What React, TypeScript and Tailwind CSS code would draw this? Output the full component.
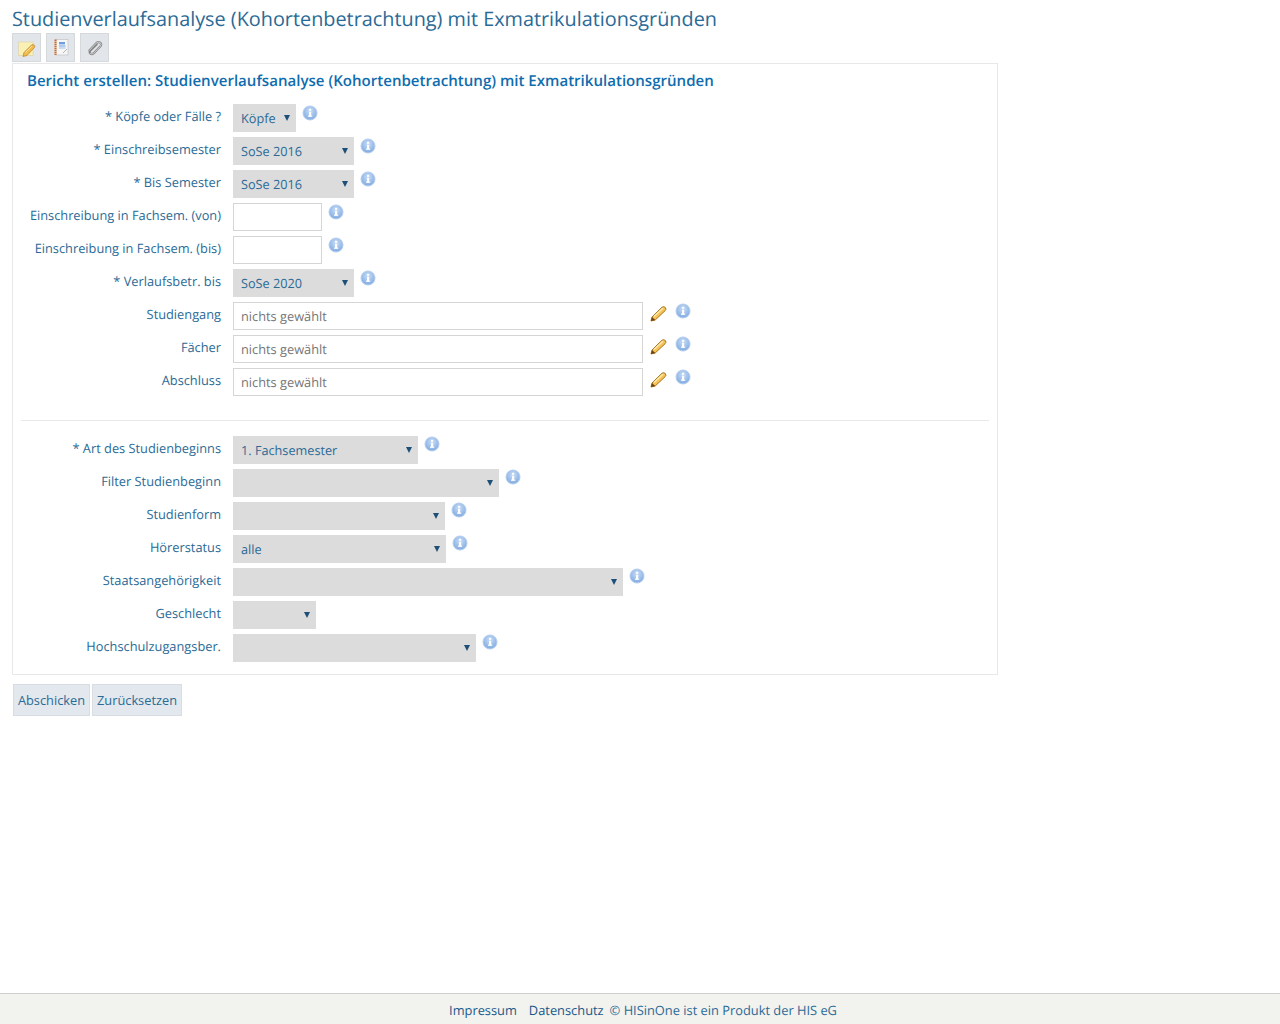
import React from 'react';

const InfoIcon = () => (
    <svg width="16" height="16" viewBox="0 0 16 16" className="block">
        <defs>
            <radialGradient id="infoBg" cx="50%" cy="35%" r="65%">
                <stop offset="0%" stopColor="#c9def8" />
                <stop offset="100%" stopColor="#7fa9e0" />
            </radialGradient>
        </defs>
        <circle cx="8" cy="8" r="7" fill="url(#infoBg)" stroke="#b4cdee" strokeWidth="1" />
        <rect x="7" y="6.8" width="2.2" height="4.4" fill="#fff" />
        <rect x="7" y="3.8" width="2.2" height="2" fill="#fff" />
        <rect x="6" y="10.6" width="4.2" height="1.2" fill="#fff" />
    </svg>
);

const PencilIcon = () => (
    <svg width="17" height="17" viewBox="0 0 17 17" className="block">
        <path d="M1 16 L2 12 L12 2.2 Q13.8 1 15.4 2.6 Q16.6 4.4 15.2 5.6 L5.2 15 Z" fill="#f4c257" stroke="#a9741a" strokeWidth="1" />
        <path d="M4 11.6 L13 3.2" stroke="#fdeab0" strokeWidth="1.4" />
        <path d="M1 16 L2 12 L5.2 15 Z" fill="#6e4210" />
    </svg>
);

const NoteIcon = () => (
    <svg width="18" height="18" viewBox="0 0 18 18" className="block">
        <rect x="0.5" y="3" width="14.5" height="13.5" fill="#fbf0b4" stroke="#ddd6b2" strokeWidth="0.8" />
        <path d="M5 17.5 L6 13.5 L13.5 6 Q15 5 16.3 6.2 Q17.4 7.8 16 9 L9 16.5 Z" fill="#f2bb50" stroke="#b9801f" strokeWidth="0.7" />
        <path d="M7.5 13.5 L14 7" stroke="#fbe3a0" strokeWidth="1" />
    </svg>
);

const BookIcon = () => (
    <svg width="16" height="17" viewBox="0 0 16 17" className="block">
        <rect x="3" y="0.5" width="12" height="15.5" fill="#f6f6f6" stroke="#c8c8c8" strokeWidth="0.8" />
        <rect x="1.5" y="0.5" width="2" height="15.5" fill="#c06a35" />
        <path d="M1 2.5h3M1 4.5h3M1 6.5h3M1 8.5h3M1 10.5h3M1 12.5h3M1 14.5h3" stroke="#f0d5bd" strokeWidth="0.7" />
        <rect x="6" y="3" width="6" height="2.4" fill="#6d9fe0" />
        <rect x="6" y="6.5" width="6.5" height="1" fill="#6d9fe0" />
        <rect x="6" y="8.5" width="6.5" height="1" fill="#9dbde8" />
        <path d="M10 14 L14 10" stroke="#b5b5b5" strokeWidth="1" />
    </svg>
);

const ClipIcon = () => (
    <svg width="16" height="16" viewBox="0 0 16 16" fill="none" className="block">
        <path d="M2.4 10.4 L9.4 3 Q11.5 1.2 13.4 2.8 Q15 4.6 13.2 6.6 L6.5 13.4 Q5 14.6 3.4 13.5 Q2 12 3.4 10.4 L9.6 4.4" stroke="#858585" strokeWidth="2.2" strokeLinecap="round" />
        <path d="M2.4 10.4 L9.4 3 Q11.5 1.2 13.4 2.8 Q15 4.6 13.2 6.6 L6.5 13.4 Q5 14.6 3.4 13.5" stroke="#dfe2e4" strokeWidth="0.8" strokeLinecap="round" />
    </svg>
);

const ToolButton = ({ children }: { children: React.ReactNode }) => (
    <div className="w-[29px] h-[29px] flex items-center justify-center bg-[#e2e6ea] border border-[#d5d9dc]">
        {children}
    </div>
);

interface RowProps {
    label: string;
    children: React.ReactNode;
}

const Row = ({ label, children }: RowProps) => (
    <div className="flex h-7 mb-[5px]">
        <label className="w-[208px] shrink-0 text-right text-[12.8px] leading-6 text-[#2a6a96]">{label}</label>
        <div className="ml-3 flex items-start">{children}</div>
    </div>
);

const Select = ({ width, value, info = true, lower = false }: { width: string; value?: string; info?: boolean; lower?: boolean }) => (
    <>
        <div className={`${width} h-7 bg-[#dcdcdc] flex items-center justify-between pl-2 pr-[6px] text-[12.7px] text-[#2a6a96]`}>
            <span className="pt-[1px]">{value}</span>
            <span className="w-0 h-0 border-l-[3.5px] border-r-[3.5px] border-t-[6px] border-l-transparent border-r-transparent border-t-[#1d4f78] -mt-[1px]" />
        </div>
        {info && (
            <span className={lower ? 'ml-[6px]' : 'ml-[6px] mt-[1px]'}>
                <InfoIcon />
            </span>
        )}
    </>
);

const TextInput = () => (
    <>
        <div className="w-[89px] h-7 border border-[#d5d5d5] bg-white" />
        <span className="ml-[6px] mt-[1px]">
            <InfoIcon />
        </span>
    </>
);

const PickerInput = () => (
    <>
        <div className="w-[410px] h-7 border border-[#d5d5d5] bg-white pl-[7px] pt-[2px] flex items-center text-[12.8px] text-[#757575]">
            nichts gewählt
        </div>
        <span className="ml-[7px] mt-[3px] w-4">
            <PencilIcon />
        </span>
        <span className="ml-[9px] mt-[1px]">
            <InfoIcon />
        </span>
    </>
);

const App: React.FC = () => {
    return (
        <div className="h-screen flex flex-col bg-white font-['Open_Sans',sans-serif] [text-rendering:geometricPrecision]">
            <div className="flex-1 pl-3">
                <h1 className="text-[19.83px] leading-[27px] pt-[5px] text-[#2a6a96]">
                    Studienverlaufsanalyse (Kohortenbetrachtung) mit Exmatrikulationsgründen
                </h1>
                <div className="flex gap-[5px] mt-px">
                    <ToolButton><NoteIcon /></ToolButton>
                    <ToolButton><BookIcon /></ToolButton>
                    <ToolButton><ClipIcon /></ToolButton>
                </div>
                <div className="w-[986px] h-[612px] mt-px border border-[#e8e8e8] pt-[7px]">
                    <h2 className="pl-[14px] text-[15.07px] leading-5 font-semibold text-[#0f6cae] mb-[13px]">
                        Bericht erstellen: Studienverlaufsanalyse (Kohortenbetrachtung) mit Exmatrikulationsgründen
                    </h2>
                    <Row label="* Köpfe oder Fälle ?"><Select width="w-[63px]" value="Köpfe" /></Row>
                    <Row label="* Einschreibsemester"><Select width="w-[121px]" value="SoSe 2016" /></Row>
                    <Row label="* Bis Semester"><Select width="w-[121px]" value="SoSe 2016" /></Row>
                    <Row label="Einschreibung in Fachsem. (von)"><TextInput /></Row>
                    <Row label="Einschreibung in Fachsem. (bis)"><TextInput /></Row>
                    <Row label="* Verlaufsbetr. bis"><Select width="w-[121px]" value="SoSe 2020" /></Row>
                    <Row label="Studiengang"><PickerInput /></Row>
                    <Row label="Fächer"><PickerInput /></Row>
                    <Row label="Abschluss"><PickerInput /></Row>
                    <div className="mx-2 mt-[24px] mb-[15px] border-t border-[#e8e8e8]" />
                    <Row label="* Art des Studienbeginns"><Select lower width="w-[185px]" value="1. Fachsemester" /></Row>
                    <Row label="Filter Studienbeginn"><Select lower width="w-[266px]" /></Row>
                    <Row label="Studienform"><Select lower width="w-[212px]" /></Row>
                    <Row label="Hörerstatus"><Select lower width="w-[213px]" value="alle" /></Row>
                    <Row label="Staatsangehörigkeit"><Select lower width="w-[390px]" /></Row>
                    <Row label="Geschlecht"><Select width="w-[83px]" info={false} /></Row>
                    <Row label="Hochschulzugangsber."><Select lower width="w-[243px]" /></Row>
                </div>
                <div className="flex gap-[2px] ml-px mt-[9px]">
                    <button className="h-8 pt-[1px] w-[77px] bg-[#e2e8ed] border border-[#d8dde1] text-[12.8px] text-[#2a6a96]">Abschicken</button>
                    <button className="h-8 pt-[1px] w-[90px] bg-[#e2e8ed] border border-[#d8dde1] text-[12.8px] text-[#2a6a96]">Zurücksetzen</button>
                </div>
            </div>
            <div className="h-[31px] bg-[#f2f2ee] border-t border-[#cfcfcf] flex justify-center text-[12.85px] leading-[33px] text-[#2a6a96] pl-[6px]">
                <span className="text-[#17598a]">Impressum</span>
                <span className="ml-3 text-[#17598a]">Datenschutz</span>
                <span className="ml-[6px]">© HISinOne ist ein Produkt der HIS eG</span>
            </div>
        </div>
    );
};

export default App;
